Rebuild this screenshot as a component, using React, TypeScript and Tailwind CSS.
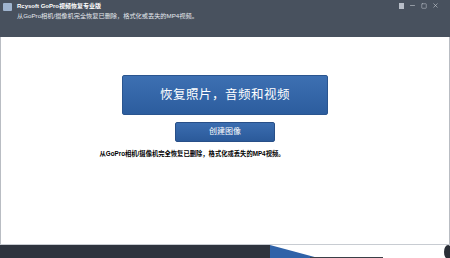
import { Minus, Square, X } from 'lucide-react';

const cjk = { fontFamily: '"Liberation Sans", "Noto Sans CJK SC", sans-serif' };

export default function App() {
  return (
    <div className="w-[450px] h-[258px] overflow-hidden flex flex-col bg-white" style={cjk}>
      {/* 标题栏 */}
      <div className="h-[37px] shrink-0 bg-[#48515e] flex items-start justify-between px-[3px] pt-[2px]">
        <div className="flex gap-[5px]">
          <div className="w-[9px] h-[8px] mt-[1px] rounded-[1px] bg-[#9fb4cf]" />
          <div className="flex flex-col text-white leading-[9px]">
            <span className="text-[6px] font-bold">Rcysoft GoPro视频恢复专业版</span>
            <span className="text-[6.2px] text-[#e6e9ee]">从GoPro相机/摄像机完全恢复已删除，格式化或丢失的MP4视频。</span>
          </div>
        </div>
        <div className="flex items-center gap-[5px] pr-[8px] text-[#c9ced6]">
          <div className="w-[5px] h-[6px] bg-[#b8bec8]" />
          <Minus size={7} strokeWidth={2} />
          <Square size={6} strokeWidth={2} />
          <X size={7} strokeWidth={2} />
        </div>
      </div>

      {/* 内容区 */}
      <div className="flex-1 flex flex-col items-center border-x border-[#b9bdc3] bg-white">
        <button className="mt-[38px] w-[206px] h-[40px] rounded-[2px] bg-gradient-to-b from-[#3d70b2] to-[#2c5d9e] border border-[#2a558f] text-white text-[12.5px] tracking-[0.5px]">
          恢复照片，音频和视频
        </button>
        <button className="mt-[7px] w-[100px] h-[20px] rounded-[2px] bg-gradient-to-b from-[#3b6db0] to-[#2b5a9a] border border-[#284f88] text-white text-[8px]">
          创建图像
        </button>
        <p className="mt-[7px] text-[6.3px] font-bold text-black leading-[9px] mr-[66px]">
          从GoPro相机/摄像机完全恢复已删除，格式化或丢失的MP4视频。
        </p>
      </div>

      {/* 底部 */}
      <div className="h-[14px] shrink-0 flex border-t border-[#c8ccd2]">
        <div className="w-[270px] bg-[#2e343e]" />
        <div className="flex-1 relative bg-white">
          <svg width="180" height="14" viewBox="0 0 180 14" className="absolute left-0 top-0">
            <polygon points="0,0 0,14 52,14" fill="#2f62a8" />
            <rect x="40" y="12" width="73" height="2" fill="#3a3f47" />
            <ellipse cx="178" cy="7" rx="4" ry="7" fill="#2a2f37" />
          </svg>
        </div>
      </div>
    </div>
  );
}
